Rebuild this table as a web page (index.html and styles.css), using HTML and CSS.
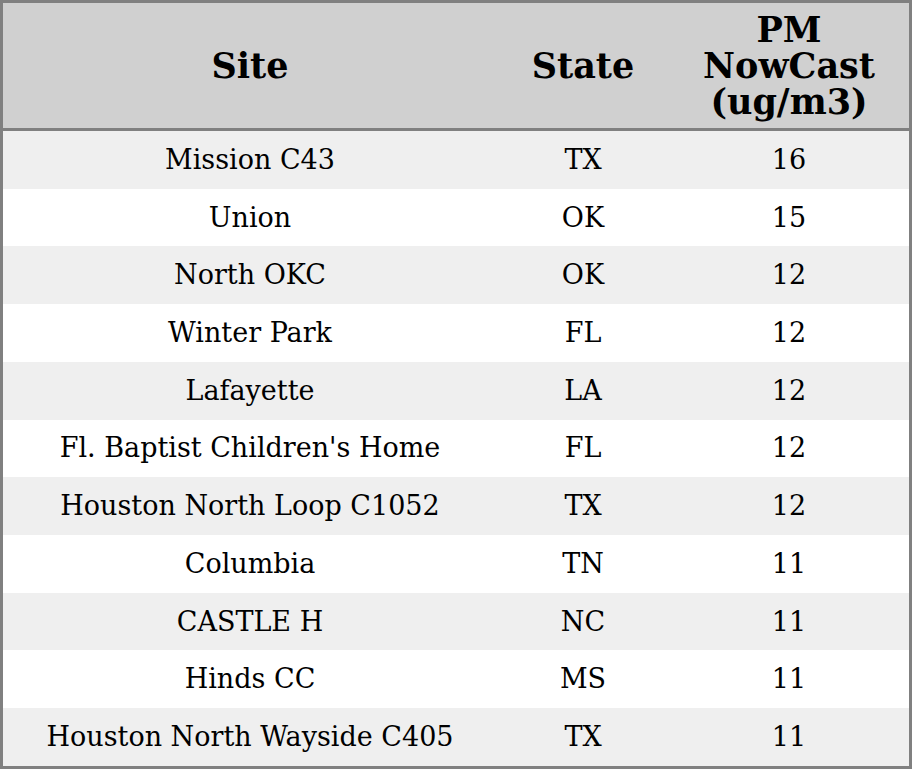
FILE: index.html
```html
<!DOCTYPE html>
<html>
<head>
<meta charset="utf-8">
<link rel="stylesheet" href="styles.css">
</head>
<body>
<table class="data">
  <colgroup>
    <col class="c-site">
    <col class="c-state">
    <col class="c-pm">
  </colgroup>
  <thead>
    <tr><th>Site</th><th>State</th><th>PM<br>NowCast<br>(ug/m3)</th></tr>
  </thead>
  <tbody>
    <tr><td>Mission C43</td><td>TX</td><td>16</td></tr>
    <tr><td>Union</td><td>OK</td><td>15</td></tr>
    <tr><td>North OKC</td><td>OK</td><td>12</td></tr>
    <tr><td>Winter Park</td><td>FL</td><td>12</td></tr>
    <tr><td>Lafayette</td><td>LA</td><td>12</td></tr>
    <tr><td>Fl. Baptist Children's Home</td><td>FL</td><td>12</td></tr>
    <tr><td>Houston North Loop C1052</td><td>TX</td><td>12</td></tr>
    <tr><td>Columbia</td><td>TN</td><td>11</td></tr>
    <tr><td>CASTLE H</td><td>NC</td><td>11</td></tr>
    <tr><td>Hinds CC</td><td>MS</td><td>11</td></tr>
    <tr><td>Houston North Wayside C405</td><td>TX</td><td>11</td></tr>
  </tbody>
</table>
</body>
</html>
```
FILE: styles.css
```css
html, body {
  margin: 0;
  padding: 0;
  background: #ffffff;
}
.data {
  width: 912px;
  box-sizing: border-box;
  border: 3px solid #808080;
  border-collapse: separate;
  border-spacing: 0;
  table-layout: fixed;
  font-family: "DejaVu Serif", serif;
  color: #000;
}
.c-site { width: 494px; }
.c-state { width: 172px; }
.c-pm { width: 240px; }
.data th {
  background: #d0d0d0;
  font-size: 35px;
  font-weight: bold;
  line-height: 36px;
  height: 128px;
  padding: 0;
  box-sizing: border-box;
  border-bottom: 3px solid #808080;
  text-align: center;
  vertical-align: middle;
}
.data td {
  font-size: 27px;
  line-height: 32px;
  height: 57.72px;
  padding: 0;
  box-sizing: border-box;
  text-align: center;
  vertical-align: middle;
}
.data tbody tr:nth-child(odd) td {
  background: #efefef;
}
```
